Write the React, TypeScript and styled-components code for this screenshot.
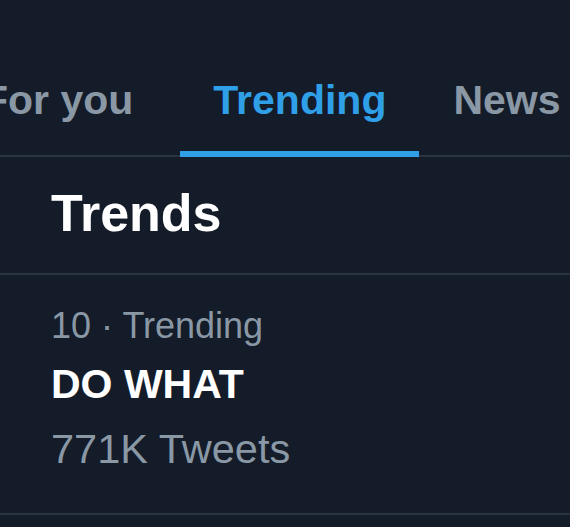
import React from "react";
import styled, { createGlobalStyle } from "styled-components";

const colors = {
  bg: "#141c29",
  line: "#2a3340",
  blue: "#2f9fe8",
  grey: "#8a98a6",
  white: "#ffffff",
};

const GlobalStyle = createGlobalStyle`
  html, body {
    margin: 0;
    padding: 0;
    background: ${colors.bg};
  }
  body {
    font-family: "Liberation Sans", Arial, Helvetica, sans-serif;
    -webkit-font-smoothing: antialiased;
  }
`;

const Screen = styled.div`
  width: 570px;
  height: 527px;
  overflow: hidden;
  background: ${colors.bg};
`;

// the tab strip is scrolled a little, so "For you" runs off the left edge
const TabBar = styled.nav`
  display: flex;
  align-items: flex-end;
  padding-top: 76px;
  margin-left: -17px;
  border-bottom: 2px solid ${colors.line};
  white-space: nowrap;
`;

const Tab = styled.div<{ $active?: boolean; $gap?: number }>`
  flex: none;
  margin-left: ${(p) => p.$gap ?? 0}px;
  margin-bottom: -2px;
  padding: 0 33px 27px;
  border-bottom: 6px solid ${(p) => (p.$active ? colors.blue : "transparent")};
  font-size: 41px;
  line-height: 48px;
  font-weight: 700;
  color: ${(p) => (p.$active ? colors.blue : colors.grey)};
`;

const Section = styled.section`
  padding: 27px 0 30px 51px;
  border-bottom: 2px solid ${colors.line};
`;

const Heading = styled.h2`
  margin: 0;
  font-size: 52px;
  line-height: 59px;
  font-weight: 700;
  color: ${colors.white};
`;

const TrendItem = styled.div`
  padding: 29px 0 40px 51px;
  border-bottom: 2px solid ${colors.line};
`;

const Meta = styled.div`
  font-size: 36px;
  line-height: 44px;
  color: ${colors.grey};
`;

const TrendName = styled.div`
  margin-top: 12px;
  font-size: 41px;
  line-height: 48px;
  font-weight: 700;
  color: ${colors.white};
`;

const Count = styled.div`
  margin-top: 17px;
  font-size: 41.5px;
  line-height: 48px;
  color: ${colors.grey};
`;

export default function App() {
  return (
    <Screen>
      <GlobalStyle />
      <TabBar>
        <Tab $gap={-33}>For you</Tab>
        <Tab $active $gap={14}>Trending</Tab>
        <Tab $gap={1}>News</Tab>
      </TabBar>
      <Section>
        <Heading>Trends</Heading>
      </Section>
      <TrendItem>
        <Meta>10 · Trending</Meta>
        <TrendName>DO WHAT</TrendName>
        <Count>771K Tweets</Count>
      </TrendItem>
    </Screen>
  );
}
